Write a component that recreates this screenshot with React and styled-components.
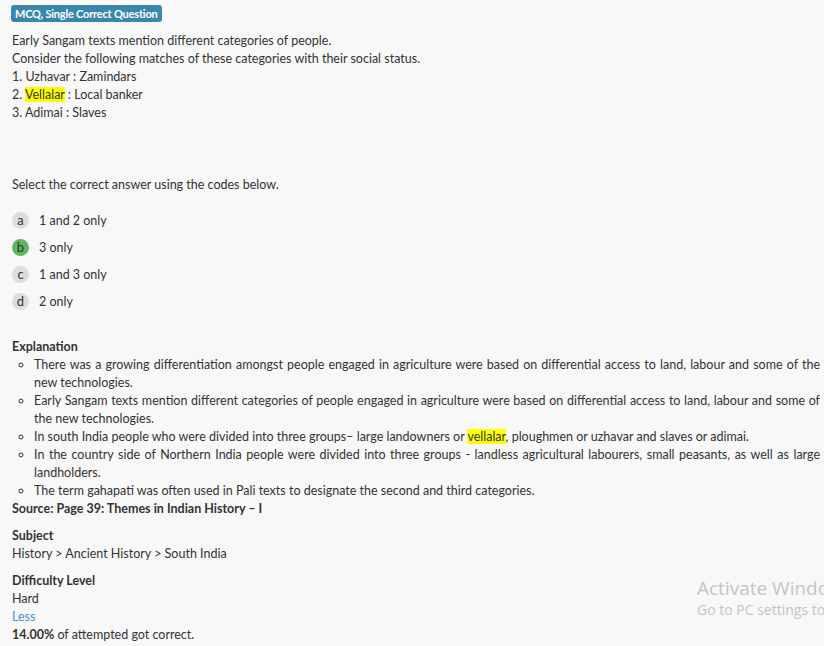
import React from "react";
import styled, { createGlobalStyle } from "styled-components";

const GlobalStyle = createGlobalStyle`
  html, body {
    margin: 0;
    padding: 0;
    background: #f8f8f8;
  }
  body {
    font-family: Lato, "Open Sans", sans-serif;
    font-size: 12.5px;
    line-height: 18px;
    color: #333;
  }
`;

const options = [
  { key: "a", text: "1 and 2 only" },
  { key: "b", text: "3 only", correct: true },
  { key: "c", text: "1 and 3 only" },
  { key: "d", text: "2 only" },
];

const App = () => {
  return (
    <Page>
      <GlobalStyle />
      <Badge>MCQ, Single Correct Question</Badge>
      <Question>
        <div>Early Sangam texts mention different categories of people.</div>
        <div>Consider the following matches of these categories with their social status.</div>
        <div>1. Uzhavar : Zamindars</div>
        <div>
          2. <Mark>Vellalar</Mark> : Local banker
        </div>
        <div>3. Adimai : Slaves</div>
      </Question>
      <Prompt>Select the correct answer using the codes below.</Prompt>
      <Options>
        {options.map((o) => (
          <Option key={o.key}>
            <OptionKey $correct={o.correct}>{o.key}</OptionKey>
            <span>{o.text}</span>
          </Option>
        ))}
      </Options>
      <Section>
        <Heading>Explanation</Heading>
        <Bullets>
          <li>
            There was a growing differentiation amongst people engaged in agriculture were based on
            differential access to land, labour and some of the new technologies.
          </li>
          <li>
            Early Sangam texts mention different categories of people engaged in agriculture were
            based on differential access to land, labour and some of the new technologies.
          </li>
          <li>
            In south India people who were divided into three groups– large landowners or{" "}
            <Mark>vellalar</Mark>, ploughmen or uzhavar and slaves or adimai.
          </li>
          <li>
            In the country side of Northern India people were divided into three groups - landless
            agricultural labourers, small peasants, as well as large landholders.
          </li>
          <li>
            The term gahapati was often used in Pali texts to designate the second and third
            categories.
          </li>
        </Bullets>
        <Heading>Source: Page 39: Themes in Indian History – I</Heading>
      </Section>
      <Section $gap>
        <Heading>Subject</Heading>
        <div>History &gt; Ancient History &gt; South India</div>
      </Section>
      <Section $gap>
        <Heading>Difficulty Level</Heading>
        <div>Hard</div>
        <LessLink href="#">Less</LessLink>
        <div>
          <strong>14.00%</strong> of attempted got correct.
        </div>
      </Section>
      <Watermark>
        <WatermarkTitle>Activate Windows</WatermarkTitle>
        <WatermarkSub>Go to PC settings to activate Windows.</WatermarkSub>
      </Watermark>
    </Page>
  );
};

export default App;

const Page = styled.div`
  padding: 5px 4px 4px 12px;
  min-height: 646px;
  box-sizing: border-box;
  overflow: hidden;
  position: relative;
`;

const Badge = styled.span`
  display: inline-block;
  background: #3a87ad;
  color: #fff;
  font-weight: 700;
  font-size: 11px;
  line-height: 17px;
  padding: 0 4px;
  border-radius: 3px;
  margin-left: -1px;
  letter-spacing: -0.2px;
`;

const Question = styled.div`
  margin-top: 9px;
`;

const Mark = styled.span`
  background: #ffff00;
`;

const Prompt = styled.div`
  margin-top: 54px;
`;

const Options = styled.div`
  margin-top: 13px;
  display: flex;
  flex-direction: column;
`;

const Option = styled.div`
  display: flex;
  align-items: center;
  gap: 10px;
  height: 27px;
`;

const OptionKey = styled.span`
  width: 17px;
  height: 17px;
  border-radius: 50%;
  background: ${(p) => (p.$correct ? "#5cb85c" : "#dddddd")};
  color: #333;
  display: flex;
  align-items: center;
  justify-content: center;
  font-size: 13px;
  line-height: 1;
  padding-bottom: 1px;
  box-sizing: border-box;
`;

const Section = styled.div`
  margin-top: ${(p) => (p.$gap ? "9px" : "23px")};
`;

const Heading = styled.div`
  font-weight: 700;
`;

const Bullets = styled.ul`
  margin: 0;
  padding-left: 22px;
  list-style: circle;
  text-align: justify;
`;

const LessLink = styled.a`
  display: block;
  color: #4a90e2;
  text-decoration: none;
`;

const Watermark = styled.div`
  position: absolute;
  left: 697px;
  top: 576px;
  font-family: "Open Sans", "Noto Sans", sans-serif;
  color: #c4c4c4;
  white-space: nowrap;
`;

const WatermarkTitle = styled.div`
  font-size: 19px;
  line-height: 24px;
`;

const WatermarkSub = styled.div`
  font-size: 14px;
  line-height: 20px;
`;
